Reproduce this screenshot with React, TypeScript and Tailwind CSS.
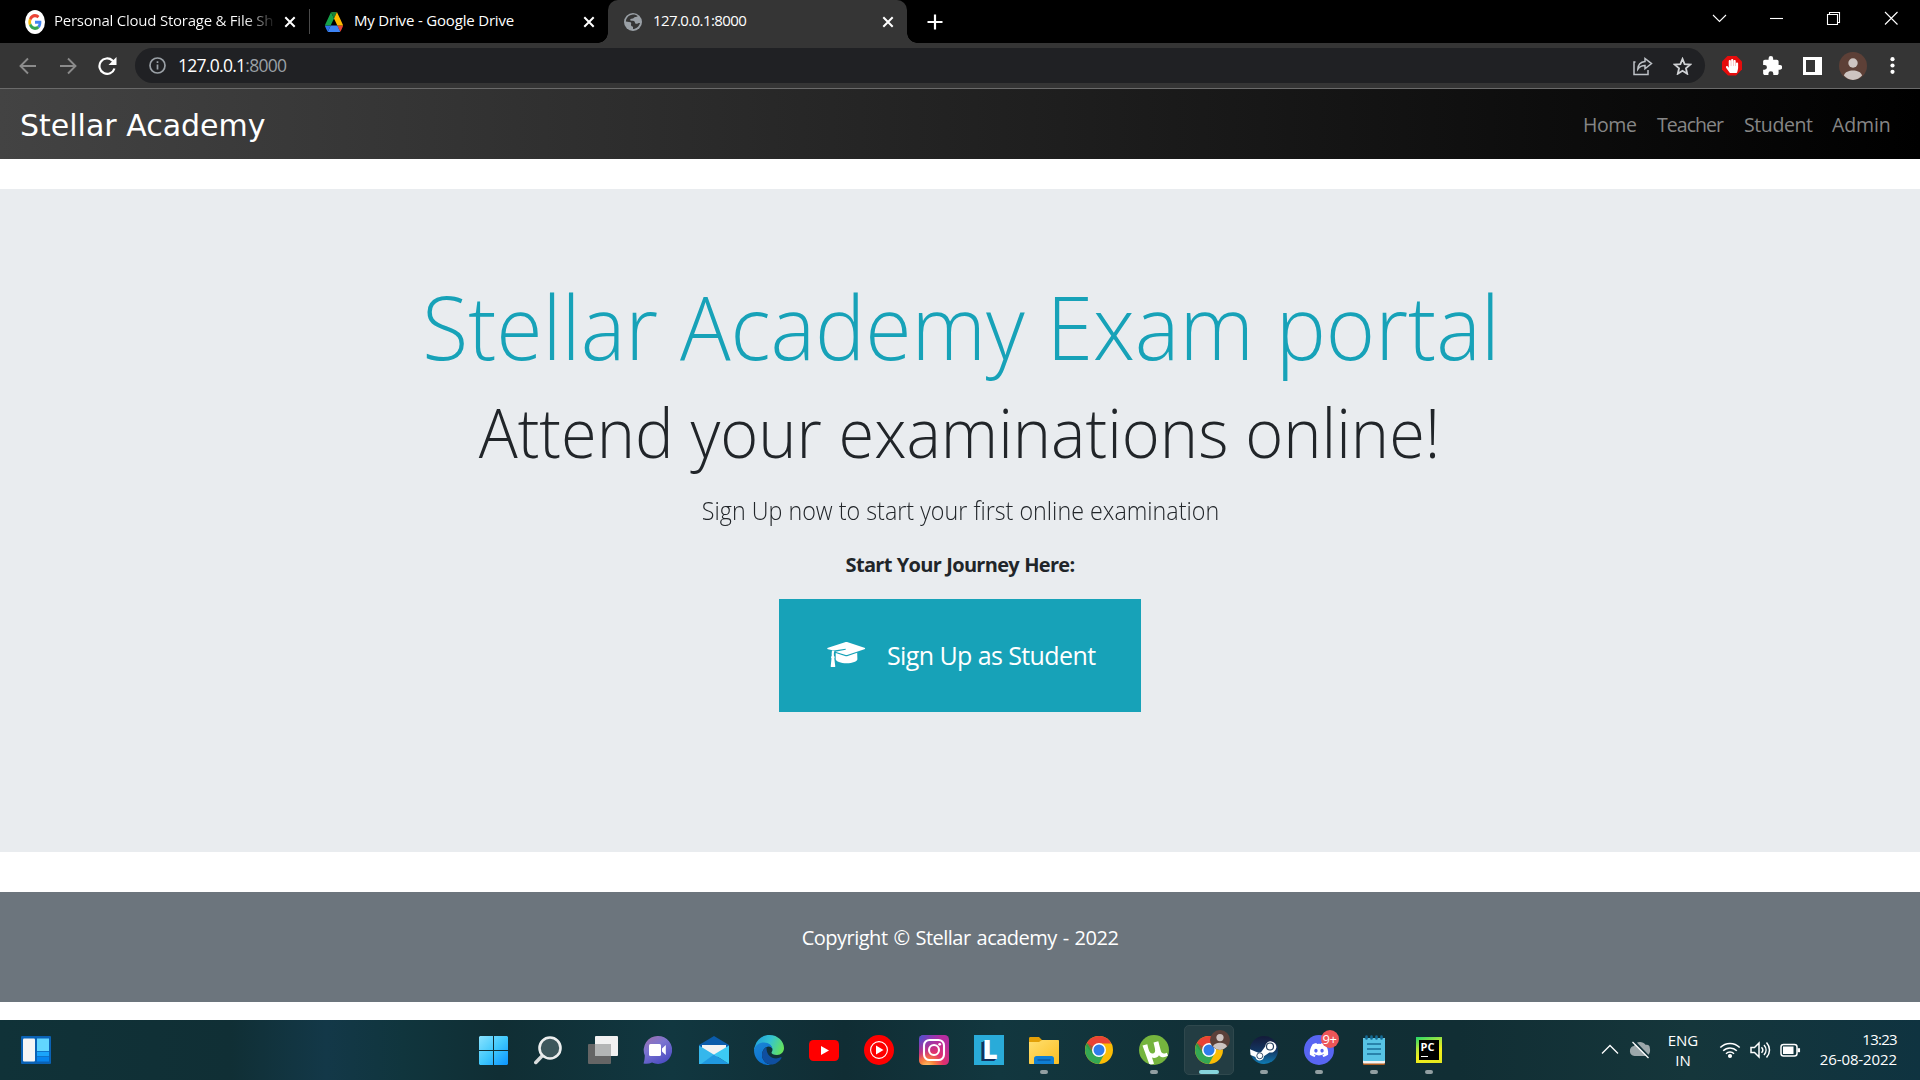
import type { ReactNode } from 'react';
import { FaDiscord, FaHandPaper } from 'react-icons/fa';

function CloseX() {
  return (
    <svg width="12" height="12" viewBox="0 0 12 12" stroke="#fff" strokeWidth="2" fill="none">
      <path d="M1.3 1.3 10.7 10.7M10.7 1.3 1.3 10.7" />
    </svg>
  );
}

function GoogleIcon() {
  return (
    <svg width="20" height="24" viewBox="0 0 24 24" preserveAspectRatio="none">
      <circle cx="12" cy="12" r="12" fill="#fff" />
      <g transform="translate(4 4) scale(.333)">
        <path fill="#EA4335" d="M24 9.5c3.54 0 6.71 1.22 9.21 3.6l6.85-6.85C35.9 2.38 30.47 0 24 0 14.62 0 6.51 5.38 2.56 13.22l7.98 6.19C12.43 13.72 17.74 9.5 24 9.5z" />
        <path fill="#4285F4" d="M46.98 24.55c0-1.57-.15-3.09-.38-4.55H24v9.02h12.94c-.58 2.96-2.26 5.48-4.78 7.18l7.73 6c4.51-4.18 7.09-10.36 7.09-17.65z" />
        <path fill="#FBBC05" d="M10.53 28.59c-.48-1.45-.76-2.99-.76-4.59s.27-3.14.76-4.59l-7.98-6.19C.92 16.46 0 20.12 0 24c0 3.88.92 7.54 2.56 10.78l7.97-6.19z" />
        <path fill="#34A853" d="M24 48c6.48 0 11.93-2.13 15.89-5.81l-7.73-6c-2.15 1.45-4.92 2.3-8.16 2.3-6.26 0-11.57-4.22-13.47-9.91l-7.98 6.19C6.51 42.62 14.62 48 24 48z" />
      </g>
    </svg>
  );
}

function DriveIcon() {
  return (
    <svg width="18" height="20" viewBox="0 0 87.3 78" preserveAspectRatio="none">
      <path fill="#2b72e8" d="m6.6 66.85 3.85 6.65c.8 1.4 1.95 2.5 3.3 3.3l13.75-23.8H0c0 1.55.4 3.1 1.2 4.5z" />
      <path fill="#16a34a" d="M43.65 25 29.9 1.2c-1.35.8-2.5 1.9-3.3 3.3L1.2 48.5A9.06 9.06 0 0 0 0 53h27.5z" />
      <path fill="#ea4335" d="M73.55 76.8c1.35-.8 2.5-1.9 3.3-3.3l1.6-2.75L86.1 57.5c.8-1.4 1.2-2.95 1.2-4.5H59.8l5.85 11.5z" />
      <path fill="#188038" d="M43.65 25 57.4 1.2C56.05.4 54.5 0 52.9 0H34.4c-1.6 0-3.15.45-4.5 1.2z" />
      <path fill="#3d84f5" d="M59.8 53H27.5L13.75 76.8c1.35.8 2.9 1.2 4.5 1.2h50.8c1.6 0 3.15-.45 4.5-1.2z" />
      <path fill="#ffba00" d="m73.4 26.5-12.7-22c-.8-1.4-1.95-2.5-3.3-3.3L43.65 25 59.8 53h27.45c0-1.55-.4-3.1-1.2-4.5z" />
    </svg>
  );
}

function GlobeIcon() {
  return (
    <svg width="18" height="18" viewBox="0 0 18 18">
      <circle cx="9" cy="9" r="9" fill="#9aa0a6" />
      <path fill="#353535" d="M8 1.8C10 1.2 12.4 2 13.8 3.2c-1 .3-1.5 1-2.6.9-1.200 0-1.400 1.300-2.500 1.500-1.200.3-2.400.2-2.600 1.400.1 1.200 2.500.6 3.800 1 1.200.5.7 2.200 1.900 2.700 1.300.4 2.400-.9 4.200-.7-.7 3.400-3.900 6-7 6v-2.200c-.8-.5-1.900-.7-2-1.900-.1-1 .7-1.800-.4-2.600L1.900 8.500C2 5 4.800 2.200 8 1.800Z" />
    </svg>
  );
}

function GraduationCapIcon() {
  return (
    <svg className="mb-[2px]" width="39" height="25" viewBox="0 0 39 25" fill="#fff">
      <path d="M18 .3c.9-.3 1.900-.3 2.800 0L37.400 5.800c1 .3 1 1.200 0 1.500l-16.600 5.500c-.9.300-1.900.300-2.800 0L8.200 9.700l10.500-2v-.9L6.700 8.600 1 7.300C0 7 0 6.100 1 5.800z" />
      <path d="M8.700 10.900 18 14c.9.300 1.900.300 2.800 0l9.400-3.200.2 6.500c0 2.300-5 4-10.800 4s-10.700-1.700-10.900-4z" />
      <path d="M5 8.500 7.400 9c-.6 1.500-.6 3-.4 5 .9.700.9 1.700.3 2.400l1 8.100c0 .3-.2.500-.5.500H4.200c-.4 0-.6-.2-.5-.5l.8-8.100c-.7-.7-.6-1.800.2-2.400-.1-2 0-4 .3-5.500z" />
    </svg>
  );
}

function TabStrip() {
  return (
    <div className="flex h-[43px] bg-black text-[15px] leading-[41px] text-white">
      <div className="flex w-[310px] items-center pl-[25px]">
        <GoogleIcon />
        <span className="mb-[2px] ml-[9px] w-[227px] bg-gradient-to-r from-white from-[84%] to-transparent to-[98%] bg-clip-text tracking-[-0.24px] whitespace-nowrap text-transparent">
          Personal Cloud Storage &amp; File Sh
        </span>
        <span className="ml-[3px]"><CloseX /></span>
        <span className="ml-[13px] h-[25px] w-px bg-[#4a4a4a]" />
      </div>
      <div className="flex w-[298px] items-center pl-[15px]">
        <DriveIcon />
        <span className="mb-[2px] ml-[11px] w-[229px] tracking-[-0.18px]">My Drive - Google Drive</span>
        <CloseX />
      </div>
      <div className="relative flex w-[299px] items-center rounded-t-[10px] bg-[#353535] pl-4">
        <span className="absolute bottom-0 -left-[10px] size-[10px] bg-[radial-gradient(circle_at_0_0,transparent_9.5px,#353535_10px)]" />
        <span className="absolute -right-[10px] bottom-0 size-[10px] bg-[radial-gradient(circle_at_100%_0,transparent_9.5px,#353535_10px)]" />
        <GlobeIcon />
        <span className="mb-[2px] ml-[11px] w-[229px] tracking-[-0.6px]">127.0.0.1:8000</span>
        <CloseX />
      </div>
      <div className="flex flex-1 items-center pl-5">
        <svg width="16" height="16" viewBox="0 0 16 16" stroke="#fff" strokeWidth="2.2"><path d="M8 .5v15M.5 8h15" /></svg>
      </div>
      <svg className="mt-[11px] mr-[12px]" width="200" height="14" viewBox="0 0 200 14" fill="none" stroke="#fff" strokeWidth="1.1">
        <path d="M5 4l6.500 6.500L18 4" />
        <path d="M62 7.500h13" />
        <path d="M119.500 3.500h10v10h-10zM121.500 3.500v-2h10v10h-2" />
        <path d="M177 1l12.500 12.500M189.500 1l-12.500 12.500" />
      </svg>
    </div>
  );
}

function Toolbar() {
  return (
    <div className="flex h-[46px] items-center border-b border-[#6a6a6a] bg-[#353535]">
      <svg className="ml-[19px]" width="98" height="18" viewBox="0 0 98 18" fill="none">
        <path stroke="#8b8b8b" strokeWidth="1.900" d="M17 9H2M9 1.500 1.500 9 9 16.500M41 9h15M49 1.500 56.500 9 49 16.500" />
        <path stroke="#fff" strokeWidth="2.200" d="M95.500 11.500A7.700 7.700 0 1 1 93.500 3.600L96 6" />
        <path fill="#fff" d="M97.500 0v8h-8z" />
      </svg>
      <div className="ml-[18px] flex h-[35px] w-[1570px] items-center rounded-full bg-[#202124] pl-[14px]">
        <svg width="17" height="17" viewBox="0 0 17 17" fill="none" stroke="#9aa0a6" strokeWidth="1.700">
          <circle cx="8.500" cy="8.500" r="7.500" /><path d="M8.500 7.500v5M8.500 4.200v1.800" />
        </svg>
        <span className="ml-3 flex-1 text-[17.5px] tracking-[-0.72px] text-white">127.0.0.1<span className="text-[#9aa0a6]">:8000</span></span>
        <svg width="20" height="20" viewBox="0 0 20 20" fill="none" stroke="#bdc1c6" strokeWidth="1.500">
          <path d="M2.500 6H1v12.500h14V14" /><path d="M12 2.500v3C7.500 6 5 9 4.800 13.200 6.800 10.500 9 9.600 12 9.600v3.200l6.500-5.200z" />
        </svg>
        <svg className="mr-[13px] ml-5" width="19" height="18" viewBox="0 0 24 23" fill="none" stroke="#d0d2d5" strokeWidth="2.300">
          <path d="m12 2.500 2.700 6.600 7.100.6-5.400 4.700 1.600 7L12 17.600l-6 3.800 1.600-7-5.400-4.700 7.100-.6z" />
        </svg>
      </div>
      <span className="ml-[17px] flex size-5 items-center justify-center bg-[#e50c0c] [clip-path:polygon(30%_0,70%_0,100%_30%,100%_70%,70%_100%,30%_100%,0_70%,0_30%)]">
        <FaHandPaper size={14} color="#fff" />
      </span>
      <svg className="ml-5" width="20" height="20" viewBox="1 1 21.500 22" fill="#fff">
        <path d="M20.500 11H19V7c0-1.100-.9-2-2-2h-4V3.500a2.500 2.500 0 0 0-5 0V5H4c-1.100 0-2 .9-2 2v3.800h1.500a2.700 2.700 0 0 1 0 5.400H2V20c0 1.100.9 2 2 2h3.800v-1.500a2.700 2.700 0 0 1 5.400 0V22H17c1.100 0 2-.9 2-2v-4h1.500a2.500 2.500 0 0 0 0-5z" />
      </svg>
      <svg className="ml-[21px]" width="19" height="18" viewBox="0 0 19 18">
        <path fill="#fff" fillRule="evenodd" d="M0 0h19v18H0zM3 3v12h9V3z" />
      </svg>
      <svg className="ml-[17px]" width="28" height="28" viewBox="0 0 28 28">
        <circle cx="14" cy="14" r="14" fill="#5d4037" />
        <circle cx="14" cy="11" r="4.700" fill="#cdc4c1" />
        <path fill="#cdc4c1" d="M4.900 23.500c1-3.600 5-5 9.100-5s8.100 1.400 9.100 5A14 14 0 0 1 14 28a14 14 0 0 1-9.100-4.500z" />
      </svg>
      <svg className="ml-[23px]" width="5" height="17" viewBox="0 0 5 17" fill="#fff">
        <circle cx="2.500" cy="2.200" r="2.100" /><circle cx="2.500" cy="8.500" r="2.100" /><circle cx="2.500" cy="14.800" r="2.100" />
      </svg>
    </div>
  );
}

function Navbar() {
  return (
    <nav className="flex h-[70px] items-center bg-[linear-gradient(to_right,#434343,#000)] pl-5 text-[19.5px] text-[#868686]">
      <span className="flex-1 pt-[3px] font-['DejaVu_Sans',sans-serif] text-[30px] leading-none text-white">Stellar Academy</span>
      <span className="w-[74px] pt-[2px] tracking-[-0.4px]">Home</span>
      <span className="w-[87px] pt-[2px] tracking-[-0.95px]">Teacher</span>
      <span className="w-[88px] pt-[2px] tracking-[-0.4px]">Student</span>
      <span className="w-[88px] pt-[2px] tracking-[-0.1px]">Admin</span>
    </nav>
  );
}

function Hero() {
  return (
    <section className="mt-[30px] flex h-[663px] flex-col items-center bg-[#e9ecef] pt-[83px] whitespace-nowrap text-[#212529]">
      <h1 className="ml-[2px] scale-x-[0.957] text-[88px] leading-[108px] font-light text-[#17a2b8]">Stellar Academy Exam portal</h1>
      <h2 className="mt-[9px] scale-x-[0.94] text-[69px] leading-[84px] font-light">Attend your examinations online!</h2>
      <p className="mt-[18px] ml-[2px] scale-x-[0.932] text-[25px] leading-[38px] font-light">Sign Up now to start your first online examination</p>
      <p className="mt-[21px] text-[20px] leading-[30px] font-bold tracking-[-0.7px] [word-spacing:0.7px]">Start Your Journey Here:</p>
      <button className="mt-[19px] flex h-[113px] w-[362px] items-center bg-[#17a2b8] pl-12 text-[25px] text-white">
        <GraduationCapIcon />
        <span className="ml-[21px] tracking-[-0.6px]">Sign Up as Student</span>
      </button>
    </section>
  );
}

function WindowsIcon() {
  return (
    <svg width="29" height="29" viewBox="0 0 29 29">
      <defs><linearGradient id="win" x1="0" y1="0" x2="1" y2="1"><stop offset="0" stopColor="#8ae3ff" /><stop offset=".5" stopColor="#40c8fc" /><stop offset="1" stopColor="#0a94ff" /></linearGradient></defs>
      <path fill="url(#win)" d="M1 0h13v14H0V1zM15 0h13l1 1v13H15zM0 15h14v14H1l-1-1zM15 15h14v13l-1 1H15z" />
    </svg>
  );
}

function SearchIcon() {
  return (
    <svg className="mr-[2px]" width="28" height="29" viewBox="0 0 28 29">
      <path d="M9 19 1.800 26.500" stroke="#d9dcdd" strokeWidth="3.500" strokeLinecap="round" />
      <circle cx="16" cy="12" r="10.500" fill="#3d575c" stroke="#eceeee" strokeWidth="2.600" />
    </svg>
  );
}

function TaskViewIcon() {
  return (
    <svg className="mr-[1px]" width="30" height="28" viewBox="0 0 30 28">
      <rect y="8" width="23" height="20" rx="1" fill="#656565" />
      <rect x="7" width="23" height="20" rx="1" fill="#f1f1f1" />
      <rect x="7" y="8" width="16" height="12" fill="#b3b5b5" />
    </svg>
  );
}

function ChatIcon() {
  return (
    <svg className="mr-[2px]" width="29" height="28" viewBox="0 0 29 28">
      <defs><linearGradient id="chat" x1="0" y1="0" x2=".6" y2="1"><stop offset="0" stopColor="#a06fa8" /><stop offset=".45" stopColor="#7b74d0" /><stop offset="1" stopColor="#4f4fc4" /></linearGradient></defs>
      <path fill="url(#chat)" d="M15 0a14 14 0 1 1-6 26.600c-2.500 1.200-5.500 1.400-8.500.9C1.500 25 1.600 22.500 1.800 19.500A14 14 0 0 1 15 0z" />
      <rect x="6" y="8" width="12" height="12" rx="1.500" fill="#fff" /><path fill="#fff" d="M19 12.500 22.800 9v10L19 15.500z" />
    </svg>
  );
}

function MailIcon() {
  return (
    <svg width="30" height="28" viewBox="0 0 30 28">
      <path fill="#0b5cab" d="M0 9 15 0l15 9v4H0z" />
      <path fill="#f3f3f3" d="M3 9h24v8L15 22 3 17z" />
      <path fill="#35b7ec" d="M0 9.500 30 28H0z" />
      <path fill="#3ccbf4" d="M30 9.500V28L15 18.500z" />
      <path fill="#1a8fdc" d="m15 18.500 15 9.500H2z" opacity=".75" />
    </svg>
  );
}

function EdgeIcon() {
  return (
    <svg width="30" height="30" viewBox="0 0 30 30">
      <defs>
        <linearGradient id="edgeTop" x1="0" y1=".3" x2="1" y2=".6"><stop offset="0" stopColor="#1fa0dd" /><stop offset=".5" stopColor="#35c4d0" /><stop offset="1" stopColor="#66e35a" /></linearGradient>
        <linearGradient id="edgeLeft" x1="0" y1="0" x2=".6" y2="1"><stop offset="0" stopColor="#1c86d6" /><stop offset="1" stopColor="#0a6fcf" /></linearGradient>
      </defs>
      <path fill="url(#edgeTop)" d="M1 11C3 4 9 0 15.500 0 24 0 30 6.500 30 13c0 4-3 7-7 7-3.500 0-5.500-1-5.500-2.200 0-.8 1-1.300 1-3.300 0-3-3.500-5.500-7.500-5.500C6 9 2 12 0 15c0-1 .5-3 1-4z" />
      <path fill="url(#edgeLeft)" d="M0 15c1-5 5.500-7.500 10-7.500 5 0 8.500 3.300 8.500 7 0-1.500-2-3-4-3-3 0-6.500 3.500-6.500 8.500 0 5 4 9 9 9.800C7.500 31 0 24.500 0 15z" />
      <path fill="#0f4fa0" d="M12.500 12.200C10 13.500 8 16.500 8 20c0 5.500 5 10 10.500 9.600 4-.8 7.500-3.600 9-6.600.3-.6-.2-1-.8-.7-6.500 3.300-14.700-.8-14.200-10.100z" />
    </svg>
  );
}

function YouTubeIcon() {
  return (
    <svg width="30" height="21" viewBox="0 0 30 21">
      <rect width="30" height="21" rx="4.500" fill="#f00" /><path fill="#fff" d="M12 6v9l8-4.500z" />
    </svg>
  );
}

function YouTubeMusicIcon() {
  return (
    <svg width="30" height="30" viewBox="0 0 30 30">
      <circle cx="15" cy="15" r="15" fill="#f00" /><circle cx="15" cy="15" r="8.400" fill="none" stroke="#fff" strokeWidth="1.100" /><path fill="#fff" d="M12 10.500v9l7.500-4.500z" />
    </svg>
  );
}

function InstagramIcon() {
  return (
    <svg width="30" height="30" viewBox="0 0 30 30">
      <defs>
        <radialGradient id="igWarm" cx=".28" cy="1.080" r="1"><stop offset="0" stopColor="#fed576" /><stop offset=".25" stopColor="#f9843c" /><stop offset=".55" stopColor="#e1306c" /><stop offset="1" stopColor="#b52d9f" /></radialGradient>
        <radialGradient id="igCool" cx="-.05" cy="0" r=".8"><stop offset="0" stopColor="#3b5bd6" /><stop offset="1" stopColor="#6a3ed0" stopOpacity="0" /></radialGradient>
      </defs>
      <rect width="30" height="30" rx="4.500" fill="url(#igWarm)" /><rect width="30" height="30" rx="4.500" fill="url(#igCool)" />
      <g fill="none" stroke="#fff" strokeWidth="2.100"><rect x="5" y="5" width="20" height="20" rx="5.500" /><circle cx="15" cy="15" r="5" /></g>
      <circle cx="20.700" cy="9.300" r="1.400" fill="#fff" />
    </svg>
  );
}

function LetterTile() {
  return (
    <span className="flex size-[30px] items-center justify-center bg-[#29abd9] pb-[2px] pl-[3px] text-[26px] leading-none font-extrabold text-white [text-shadow:-1px_1px_0_#12315f,-2px_2px_0_#12315f,-3px_2px_0_#12315f]">
      L
    </span>
  );
}

function ExplorerIcon() {
  return (
    <svg width="30" height="27" viewBox="0 0 30 27">
      <defs><linearGradient id="folder" x1="0" y1="0" x2="1" y2="1"><stop offset="0" stopColor="#ffdf70" /><stop offset="1" stopColor="#fcbf22" /></linearGradient></defs>
      <path fill="#e3a008" d="M0 1.500C0 .5.500 0 1.500 0H10l3 3h16v5H0z" />
      <path fill="url(#folder)" d="M0 5h10l3-2h16c.6 0 1 .4 1 1v22c0 .6-.4 1-1 1H1c-.6 0-1-.4-1-1z" />
      <path fill="#0f7fd4" d="M5 27v-5.500C5 20 6 19 7.500 19h15c1.500 0 2.500 1 2.500 2.500V27z" /><path stroke="#0a4f94" strokeWidth="1.200" d="M8.500 23h13" />
    </svg>
  );
}

function ChromeIcon() {
  return (
    <svg width="28" height="28" viewBox="0 0 28 28">
      <circle cx="14" cy="14" r="14" fill="#fbbc05" />
      <path fill="#ea4335" d="M14 14V7.500h12.400A14 14 0 0 0 1.900 7L8.400 17.200z" />
      <path fill="#34a853" d="M1.900 7A14 14 0 0 0 14 28l5.700-10.800L14 14l-5.600 3.200z" />
      <path fill="#188038" d="M1.900 7 1 9.500l7.400 9.700L14 14z" opacity=".35" />
      <circle cx="14" cy="14" r="7" fill="#fff" /><circle cx="14" cy="14" r="5.500" fill="#2f7de9" />
    </svg>
  );
}

function TorrentIcon() {
  return (
    <svg width="30" height="30" viewBox="0 0 30 30">
      <defs><clipPath id="torrent"><circle cx="15" cy="15" r="15" /></clipPath></defs>
      <g clipPath="url(#torrent)">
        <rect width="30" height="30" fill="#75b43e" />
        <path fill="#fff" d="M3.500 10.500 8.300 9.300c1 4.200 2 9.700 5.400 9.300 3-.4 2.600-3.600 2-6.200l-1.200-5L19.300 6.300l2.500 9.500c.6 2.300 2.200 3.200 4.200 2.600l1.800-.6 1.200 3c-3.200 2-7.200 2-9 -.6-1.200 2.200-4.200 3.300-7 2.400l2 6.200-4.300 1.500z" />
      </g>
    </svg>
  );
}

function SteamIcon() {
  return (
    <span className="flex size-7 items-center justify-center rounded-full bg-gradient-to-b from-[#131a38] via-[#12345f] to-[#0c7cb4]">
      <svg width="28" height="28" viewBox="0 0 28 28">
        <path fill="#fff" d="M0 13.300 8.300 16.700l2.900-.7 4-5.500a5.600 5.600 0 1 1 4.200 5.900l-5.500 3.900a4.300 4.300 0 0 1-8.500.7L.6 19z" />
        <circle cx="20" cy="10.500" r="3.500" fill="#fff" stroke="#27405f" strokeWidth="1.200" />
        <circle cx="9.800" cy="19.800" r="3" fill="none" stroke="#27405f" strokeWidth=".9" />
      </svg>
    </span>
  );
}

function DiscordIcon() {
  return (
    <span className="relative flex size-[30px] items-center justify-center rounded-full bg-[#5865f2]">
      <FaDiscord size={20} color="#fff" />
      <span className="absolute -top-[5px] -right-[5px] flex size-[18px] items-center justify-center rounded-full bg-[#ed5558] text-[13px] leading-none font-medium tracking-[-0.5px] text-white">9+</span>
    </span>
  );
}

function NotepadIcon() {
  return (
    <svg width="22" height="30" viewBox="0 0 22 30">
      <rect y="3" width="22" height="27" rx="1" fill="#ad5a1e" />
      <rect y="3" width="22" height="25.500" rx="1" fill="#f2f2f2" />
      <rect y="3" width="22" height="23" rx="1" fill="#57c3e4" />
      <path stroke="#146a94" strokeWidth="2.600" strokeLinecap="round" d="M3.500 1.500v2M8.500 1.500v2M13.500 1.500v2M18.500 1.500v2" />
      <path stroke="#1b6f98" strokeWidth="1.500" d="M4 9h14M4 14h14M4 19h14" />
    </svg>
  );
}

function PyCharmIcon() {
  return (
    <span className="flex size-[26px] items-center justify-center bg-[linear-gradient(160deg,#22d96a_0%,#b6e63a_35%,#f3ee1c_60%,#e3e81f_100%)]">
      <span className="flex size-5 flex-col items-start bg-black pt-[2px] pl-[2px]">
        <span className="text-[11px] leading-[10px] font-bold text-white">PC</span>
        <span className="mt-[4px] h-px w-[7px] bg-white" />
      </span>
    </span>
  );
}

function ActiveChromeIcon() {
  return (
    <span className="relative">
      <ChromeIcon />
      <svg className="absolute -top-[6px] left-[15px]" width="20" height="20" viewBox="0 0 20 20">
        <circle cx="10" cy="10" r="10" fill="#5b403a" /><circle cx="10" cy="7.600" r="3.600" fill="#cdc3c1" />
        <path fill="#cdc3c1" d="M3 16.500c.8-2.500 3.700-3.700 7-3.700s6.200 1.200 7 3.700A10 10 0 0 1 10 20a10 10 0 0 1-7-3.500z" />
      </svg>
    </span>
  );
}

type App = { name: string; icon: ReactNode; running?: boolean; active?: boolean };

const apps: App[] = [
  { name: 'start', icon: <WindowsIcon /> },
  { name: 'search', icon: <SearchIcon /> },
  { name: 'taskview', icon: <TaskViewIcon /> },
  { name: 'chat', icon: <ChatIcon /> },
  { name: 'mail', icon: <MailIcon /> },
  { name: 'edge', icon: <EdgeIcon /> },
  { name: 'youtube', icon: <YouTubeIcon /> },
  { name: 'music', icon: <YouTubeMusicIcon /> },
  { name: 'instagram', icon: <InstagramIcon /> },
  { name: 'letter', icon: <LetterTile /> },
  { name: 'explorer', icon: <ExplorerIcon />, running: true },
  { name: 'chrome', icon: <ChromeIcon /> },
  { name: 'torrent', icon: <TorrentIcon />, running: true },
  { name: 'chrome-active', icon: <ActiveChromeIcon />, active: true },
  { name: 'steam', icon: <SteamIcon />, running: true },
  { name: 'discord', icon: <DiscordIcon />, running: true },
  { name: 'notepad', icon: <NotepadIcon />, running: true },
  { name: 'pycharm', icon: <PyCharmIcon />, running: true },
];

function TaskButton({ app }: { app: App }) {
  return (
    <div className="flex h-[60px] w-[55px] items-center justify-center">
      <div className={app.active ? 'relative flex size-[50px] items-center justify-center rounded-[5px] border border-[#2f484d] bg-[#233d43]' : 'relative flex size-[50px] items-center justify-center'}>
        {app.icon}
        {app.running && <span className="absolute bottom-[1px] left-[21px] h-1 w-2 rounded-full bg-[#929fa2]" />}
        {app.active && <span className="absolute bottom-0 left-[14px] h-1 w-5 rounded-full bg-[#86d5dc]" />}
      </div>
    </div>
  );
}

function Tray() {
  return (
    <div className="flex h-full items-center text-[15px] leading-5 text-white">
      <svg width="60" height="30" viewBox="0 0 60 30" fill="none">
        <path stroke="#fff" strokeWidth="1.300" d="m2 18.500 8-8 8 8" />
        <path fill="#9ca7aa" d="M34.500 21.500a5 5 0 0 1-.5-9.900c1.500-4.800 8.500-5.800 11.500-1.300 3-.6 4.500 1.200 4.300 3.200 1 4-.6 8-4.500 8z" transform="translate(0 -.500)" />
        <path stroke="#12323a" strokeWidth="2" d="m34 6 16 17" /><path stroke="#fff" strokeWidth="1.300" d="m32.500 7 16 16" />
      </svg>
      <div className="ml-[7px] w-[32px] text-center"><p>ENG</p><p>IN</p></div>
      <svg className="ml-[20px]" width="82" height="20" viewBox="0 0 82 20" fill="none" stroke="#fff" strokeWidth="1.500">
        <path d="M1.300 7.500a13.600 13.600 0 0 1 19.400 0M4.200 10.800a9.500 9.500 0 0 1 13.600 0M7 13.800a5.600 5.600 0 0 1 8 0" />
        <circle cx="11" cy="16" r="1.300" fill="#fff" />
        <path d="M32 7.500h3.500L40 3v14l-4.500-4.500H32zM42.500 7.200c1.500 1.600 1.500 4 0 5.600M45 5c2.700 3 2.700 7 0 10M47.500 2.500c4 4.500 4 10.500 0 15" />
        <rect x="62" y="4.500" width="16" height="11.500" rx="2.500" /><rect x="64" y="6.500" width="10.500" height="7.500" fill="#fff" stroke="none" /><path strokeWidth="2.500" d="M79.800 8.200v4" />
      </svg>
      <div className="w-[96px] text-right"><p className="-mt-[2px] tracking-[-0.7px]">13:23</p><p className="tracking-[-0.1px]">26-08-2022</p></div>
    </div>
  );
}

function Taskbar() {
  return (
    <footer className="flex h-[60px] items-center bg-[#10323a] bg-[linear-gradient(90deg,#103238_0%,#102f35_12%,#133848_17%,#10353d_21%,#102e34_26%,#113740_35%,#102d34_44%,#12373f_52%,#112f36_64%,#112e34_76%,#15363b_88%,#0f3340_100%)] pr-[23px]">
      <div className="w-[466px] pl-[21px]">
        <svg width="30" height="28" viewBox="0 0 30 28">
          <rect width="30" height="28" rx="1" fill="#0a62b5" /><rect x="2" y="2.500" width="12" height="23" rx="1" fill="#f5f5f5" />
          <path fill="#62d6ff" d="M16 2.500h12V15H16z" /><path fill="#1ba5fb" d="M16 15.700h12v4.600H16z" /><path fill="#0785ee" d="M16 21h12v4.500H16z" />
        </svg>
      </div>
      <div className="flex flex-1">{apps.map((a) => <TaskButton key={a.name} app={a} />)}</div>
      <Tray />
    </footer>
  );
}

export default function App() {
  return (
    <div className="flex h-[1080px] w-[1920px] flex-col overflow-hidden bg-white font-['Open_Sans','Noto_Sans',sans-serif]">
      <TabStrip />
      <Toolbar />
      <Navbar />
      <Hero />
      <div className="mt-10 mb-[18px] h-[110px] bg-[#6c757d] pt-[31px] text-center text-[20px] leading-[30px] tracking-[-0.5px] text-white [word-spacing:1.2px]">
        Copyright © Stellar academy - 2022
      </div>
      <Taskbar />
    </div>
  );
}
